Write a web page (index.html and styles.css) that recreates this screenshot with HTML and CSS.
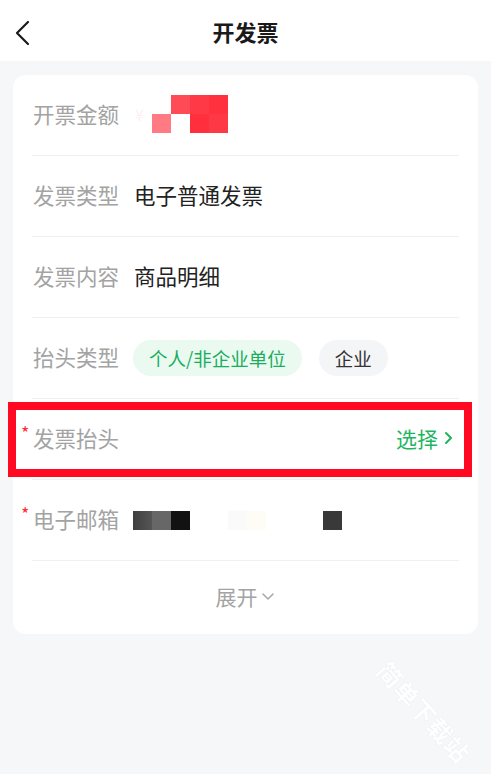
FILE: index.html
```html
<!DOCTYPE html>
<html>
  <head>
    <meta name="viewport" content="width=device-width, initial-scale=1.0">
    <link rel="stylesheet" href="styles.css">
  </head>
  <body>
    <div class="nav-bar">
      <svg class="back-icon" width="20" height="28" viewBox="0 0 20 28">
        <path d="M14 3 L3 14 L14 25" fill="none" stroke="#1a1a1a" stroke-width="2.2" stroke-linecap="round" stroke-linejoin="round"/>
      </svg>
      <h1 class="nav-title">开发票</h1>
    </div>

    <div class="page">
      <div class="card">
        <div class="form-row">
          <span class="row-label">开票金额</span>
          <span class="yen">¥</span>
          <div class="mosaic amount-mosaic">
            <span class="cell"></span><span class="cell red-a"></span><span class="cell red-b"></span><span class="cell red-c"></span>
            <span class="cell red-d"></span><span class="cell"></span><span class="cell red-e"></span><span class="cell red-f"></span>
          </div>
        </div>
        <div class="form-row">
          <span class="row-label">发票类型</span>
          <span class="row-value">电子普通发票</span>
        </div>
        <div class="form-row">
          <span class="row-label">发票内容</span>
          <span class="row-value">商品明细</span>
        </div>
        <div class="form-row">
          <span class="row-label">抬头类型</span>
          <span class="pill pill-active">个人/非企业单位</span>
          <span class="pill">企业</span>
        </div>
        <div class="form-row">
          <span class="row-label required">发票抬头</span>
          <span class="select-link">选择
            <svg width="10" height="16" viewBox="0 0 10 16"><path d="M2 3 L7 8 L2 13" fill="none" stroke="#1db55f" stroke-width="2" stroke-linecap="round" stroke-linejoin="round"/></svg>
          </span>
        </div>
        <div class="form-row">
          <span class="row-label required">电子邮箱</span>
          <div class="mosaic mail-mosaic">
            <span class="cell g1"></span><span class="cell g2"></span><span class="cell g3"></span><span class="cell"></span><span class="cell"></span><span class="cell g4"></span><span class="cell g5"></span><span class="cell"></span><span class="cell"></span><span class="cell"></span><span class="cell g6"></span>
          </div>
        </div>
        <div class="expand-row">
          <span>展开</span>
          <svg width="16" height="12" viewBox="0 0 16 12"><path d="M3 4 L8 9 L13 4" fill="none" stroke="#aaa" stroke-width="1.6" stroke-linecap="round" stroke-linejoin="round"/></svg>
        </div>

        <div class="highlight-box"></div>
      </div>
    </div>

    <div class="watermark">简单下载站</div>
  </body>
</html>
```

FILE: styles.css
```css
html, body {
  margin: 0;
  padding: 0;
}
body {
  width: 491px;
  height: 774px;
  overflow: hidden;
  background-color: #f6f7f9;
  font-family: "Noto Sans CJK SC", "Noto Sans", sans-serif;
  position: relative;
}
.nav-bar {
  height: 61px;
  background-color: #fff;
  display: flex;
  align-items: center;
  justify-content: center;
  position: relative;
}
.back-icon {
  position: absolute;
  left: 14px;
  top: 19px;
}
.nav-title {
  margin: 0;
  font-size: 22px;
  font-weight: bold;
  color: #1a1a1a;
}
.page {
  padding: 14px 13px 0 13px;
}
.card {
  position: relative;
  background-color: #fff;
  border-radius: 13px;
  padding: 0 19px 0 19px;
}
.form-row {
  height: 77px;
  padding-bottom: 3px;
  border-bottom: 1px solid #f0f0f0;
  display: flex;
  align-items: center;
  padding-left: 1px;
}
.row-label {
  width: 102px;
  flex-shrink: 0;
  font-size: 21.5px;
  color: #a3a3a3;
  position: relative;
}
.required::before {
  content: "*";
  position: absolute;
  left: -12px;
  top: -3px;
  font-size: 18px;
  color: #ff2a3a;
}
.row-value {
  font-size: 21.5px;
  color: #222;
  margin-left: -1px;
}
.yen {
  font-size: 16px;
  color: #fff0f1;
  width: 17px;
}
.mosaic {
  display: grid;
  grid-template-columns: repeat(4, 19px);
  grid-auto-rows: 19px;
}
.amount-mosaic {
  margin-top: 1px;
}
.mail-mosaic {
  grid-template-columns: repeat(11, 19px);
  grid-auto-rows: 19px;
  margin-left: -2px;
  margin-top: 3px;
}
.red-a { background-color: #ff4b56; }
.red-b { background-color: #ff3a46; }
.red-c { background-color: #ff313f; }
.red-d { background-color: #ff7a82; }
.red-e { background-color: #ff2f3e; }
.red-f { background-color: #ff3845; }
.g1 { background: linear-gradient(to right, #3f3f3f, #555); }
.g2 { background-color: #676767; }
.g3 { background-color: #121212; }
.g4 { background-color: #fafafa; }
.g5 { background-color: #fdfdf6; }
.g6 { background-color: #393939; }
.pill {
  height: 36px;
  border-radius: 18px;
  padding: 0 16px;
  display: flex;
  align-items: center;
  font-size: 18.5px;
  color: #333;
  background-color: #f4f5f7;
  margin-right: 17px;
  margin-top: 2px;
}
.pill-active {
  background-color: #eafaf1;
  color: #1aad5c;
  margin-left: -2px;
}
.select-link {
  margin-left: auto;
  font-size: 21px;
  color: #1db55f;
  display: flex;
  align-items: center;
  gap: 6px;
  margin-right: 5px;
}
.expand-row {
  height: 70px;
  padding-bottom: 3px;
  display: flex;
  align-items: center;
  justify-content: center;
  font-size: 21px;
  color: #a3a3a3;
  gap: 2px;
}
.highlight-box {
  position: absolute;
  left: -5px;
  top: 327px;
  width: 448px;
  height: 59px;
  border: 8px solid #ff0a22;
}
.watermark {
  position: absolute;
  left: 362px;
  top: 694px;
  transform: rotate(48deg);
  font-size: 24px;
  font-weight: bold;
  color: #fff;
  text-shadow: 0 0 1px #dfe1e6;
  letter-spacing: 1px;
}
```
